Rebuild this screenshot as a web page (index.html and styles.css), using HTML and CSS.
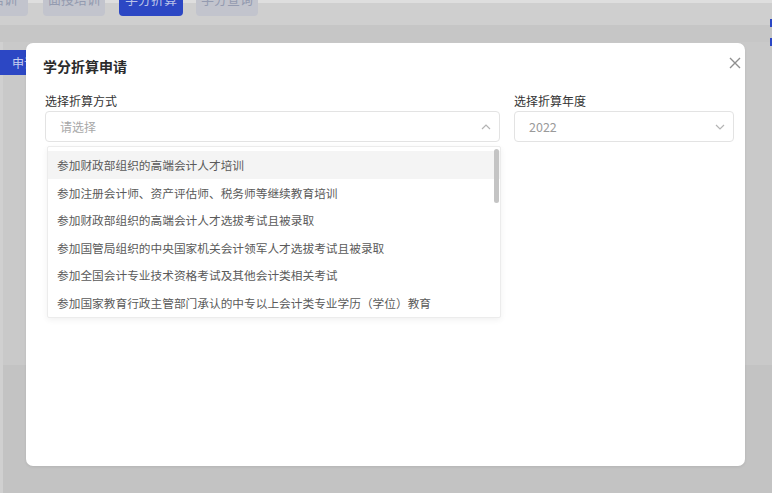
FILE: index.html
```html
<!DOCTYPE html>
<html>
<head>
  <meta charset="UTF-8">
  <meta name="viewport" content="width=device-width, initial-scale=1.0">
  <title>学分折算申请</title>
  <link rel="stylesheet" href="styles.css">
</head>
<body>
  <div class="page">
    <div class="tabs">
      <span class="tab tab-cut">线培训</span>
      <span class="tab">面授培训</span>
      <span class="tab active">学分折算</span>
      <span class="tab">学分查询</span>
    </div>
    <div class="band"></div>
    <div class="content">
      <span class="side-btn">申请</span>
    </div>
    <div class="edge-marks">
      <i></i>
      <i></i>
    </div>
  </div>

  <div class="modal">
    <div class="modal-header">
      <h2>学分折算申请</h2>
      <svg class="close" width="12" height="12" viewBox="0 0 12 12">
        <path d="M1 1L11 11M11 1L1 11" stroke="#8f8f8f" stroke-width="1.4" fill="none"/>
      </svg>
    </div>
    <div class="modal-body">
      <div class="field field-wide">
        <label>选择折算方式</label>
        <div class="select focus">
          <span class="placeholder">请选择</span>
          <svg width="10" height="6" viewBox="0 0 10 6"><path d="M1 5L5 1L9 5" stroke="#b4b4b4" stroke-width="1.2" fill="none"/></svg>
        </div>
        <ul class="dropdown">
          <li class="hover">参加财政部组织的高端会计人才培训</li>
          <li>参加注册会计师、资产评估师、税务师等继续教育培训</li>
          <li>参加财政部组织的高端会计人才选拔考试且被录取</li>
          <li>参加国管局组织的中央国家机关会计领军人才选拔考试且被录取</li>
          <li>参加全国会计专业技术资格考试及其他会计类相关考试</li>
          <li>参加国家教育行政主管部门承认的中专以上会计类专业学历（学位）教育</li>
          <span class="scroll-thumb"></span>
        </ul>
      </div>
      <div class="field field-narrow">
        <label>选择折算年度</label>
        <div class="select">
          <span class="value">2022</span>
          <svg width="10" height="6" viewBox="0 0 10 6"><path d="M1 1L5 5L9 1" stroke="#b4b4b4" stroke-width="1.2" fill="none"/></svg>
        </div>
      </div>
    </div>
  </div>
</body>
</html>
```

FILE: styles.css
```css
html, body {
  margin: 0;
  height: 100%;
}
body {
  font-family: "Noto Sans CJK SC", "Noto Sans", sans-serif;
  background-color: #c4c4c4;
  overflow: hidden;
  position: relative;
}
.page {
  height: 100%;
  display: flex;
  flex-direction: column;
}
.tabs {
  height: 25px;
  background: linear-gradient(#dedede 0, #dedede 3px, #cfcfcf 3px);
  display: flex;
  align-items: flex-start;
  overflow: hidden;
}
.tab {
  margin-top: -16px;
  height: 32px;
  line-height: 30px;
  font-size: 13px;
  color: #949bb0;
  background-color: #c2c4cd;
  border-radius: 4px;
  width: 62px;
  margin-right: 14px;
  text-align: center;
  white-space: nowrap;
}
.tab-cut {
  margin-left: -33px;
  width: 61px;
  margin-right: 15px;
}
.tab.active {
  width: 64px;
  margin-right: 13px;
  background-color: #2c47c4;
  color: #b9c2e8;
}
.band {
  height: 17px;
  background-color: #c6c6c6;
}
.content {
  flex: 1;
  background: linear-gradient(#c9c9c9 0, #c9c9c9 323px, #c3c3c3 323px);
  border-left: 3px solid #d0d0d0;
  padding-top: 8px;
}
.side-btn {
  display: block;
  width: 22px;
  margin-left: -3px;
  height: 25px;
  line-height: 25px;
  background-color: #2c47c4;
  color: #c8d0f0;
  font-size: 12px;
  padding-left: 12px;
  overflow: hidden;
  white-space: nowrap;
  border-radius: 0 4px 4px 0;
}
.edge-marks {
  position: absolute;
  right: 0;
  top: 19px;
  display: flex;
  flex-direction: column;
  gap: 11px;
}
.edge-marks i {
  display: block;
  width: 2px;
  height: 8px;
  background-color: #2c47c4;
}
.modal {
  position: absolute;
  left: 26px;
  top: 43px;
  width: 719px;
  height: 423px;
  background-color: #fff;
  border-radius: 7px;
  box-shadow: 0 1px 3px rgba(0, 0, 0, 0.08);
}
.modal-header {
  padding: 13px 17px 0;
  height: 20px;
  display: flex;
  justify-content: space-between;
  align-items: center;
}
.modal-header h2 {
  margin: 0;
  font-size: 14px;
  font-weight: bold;
  color: #2b2b2b;
  line-height: 20px;
}
.close {
  margin-right: -13px;
  margin-top: -7px;
}
.modal-body {
  padding: 16px 11px 0 19px;
  display: flex;
  gap: 14px;
}
.field {
  position: relative;
}
.field-wide {
  width: 455px;
}
.field-narrow {
  width: 220px;
}
label {
  display: block;
  font-size: 12px;
  line-height: 18px;
  color: #333;
  margin-bottom: 1px;
}
.select {
  height: 29px;
  border: 1px solid #e3e3e3;
  border-radius: 4px;
  display: flex;
  align-items: center;
  justify-content: space-between;
  padding: 0 8px 0 14px;
  font-size: 12px;
}
.placeholder {
  color: #a8a8a8;
}
.value {
  color: #9a9a9a;
  font-size: 12.5px;
}
.dropdown {
  position: absolute;
  left: 2px;
  top: 54px;
  width: 454px;
  margin: 0;
  padding: 4px 0 2px;
  list-style: none;
  background-color: #fff;
  border: 1px solid #ececec;
  border-radius: 2px;
  box-shadow: 0 2px 6px rgba(0, 0, 0, 0.06);
  box-sizing: border-box;
  height: 172px;
}
.dropdown li {
  height: 27.6px;
  line-height: 27.6px;
  padding-left: 9px;
  font-size: 11.7px;
  color: #5a5a5a;
  white-space: nowrap;
}
.dropdown li.hover {
  background-color: #f4f4f4;
}
.scroll-thumb {
  position: absolute;
  right: 1px;
  top: 2px;
  width: 5px;
  height: 54px;
  border-radius: 3px;
  background-color: #c4c4c4;
}
```
